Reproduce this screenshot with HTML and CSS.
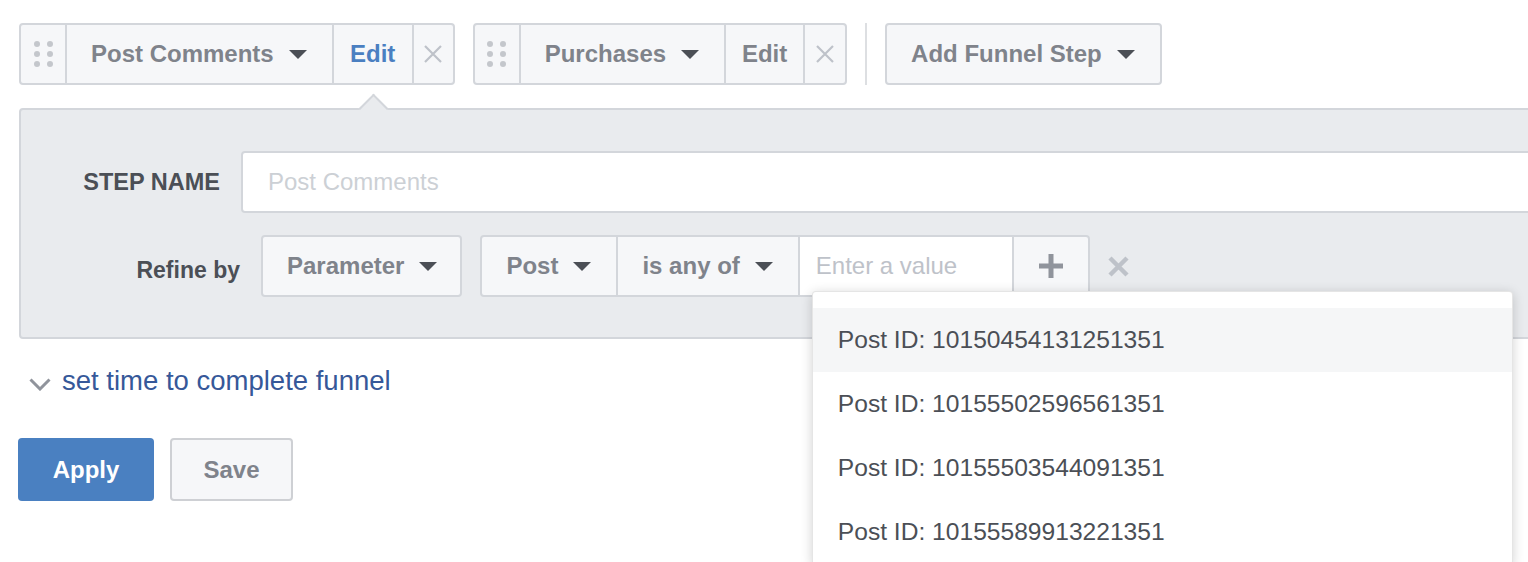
FILE: index.html
```html
<html>
	<head>
		<title>Funnel steps</title>
		<meta charset="utf-8" />
		<link rel="stylesheet" href="styles.css">
	</head>
	<body>
		<div class="page">
			<div class="toolbar">
				<div class="step">
					<div class="cell handle"><span class="dots"><i></i><i></i><i></i><i></i><i></i><i></i></span></div>
					<div class="cell select">Post Comments<span class="caret"></span></div>
					<div class="cell edit active">Edit</div>
					<div class="cell close">
						<svg width="20" height="20" viewBox="0 0 20 20"><path d="M2 2L18 18M18 2L2 18" stroke="#bec2c9" stroke-width="2.2" fill="none"/></svg>
					</div>
				</div>
				<div class="step">
					<div class="cell handle"><span class="dots"><i></i><i></i><i></i><i></i><i></i><i></i></span></div>
					<div class="cell select">Purchases<span class="caret"></span></div>
					<div class="cell edit small">Edit</div>
					<div class="cell close wide">
						<svg width="20" height="20" viewBox="0 0 20 20"><path d="M2 2L18 18M18 2L2 18" stroke="#bec2c9" stroke-width="2.2" fill="none"/></svg>
					</div>
				</div>
				<div class="divider"></div>
				<div class="step">
					<div class="cell select">Add Funnel Step<span class="caret"></span></div>
				</div>
			</div>

			<div class="panel">
				<span class="notch"></span>
				<div class="row">
					<label class="label name-label">STEP NAME</label>
					<div class="text-input">Post Comments</div>
				</div>
				<div class="row refine">
					<label class="label refine-label">Refine by</label>
					<div class="step">
						<div class="cell select param">Parameter<span class="caret"></span></div>
					</div>
					<div class="step rule">
						<div class="cell select">Post<span class="caret"></span></div>
						<div class="cell select">is any of<span class="caret"></span></div>
						<div class="cell value">
							<span class="placeholder">Enter a value</span>
							<div class="menu">
								<div class="item hover">Post ID: 10150454131251351</div>
								<div class="item">Post ID: 10155502596561351</div>
								<div class="item">Post ID: 10155503544091351</div>
								<div class="item">Post ID: 10155589913221351</div>
							</div>
						</div>
						<div class="cell plus">
							<svg width="24" height="24" viewBox="0 0 24 24"><path d="M12 0V24M0 12H24" stroke="#90949c" stroke-width="5" fill="none"/></svg>
						</div>
					</div>
					<div class="remove">
						<svg width="21" height="21" viewBox="0 0 21 21"><path d="M2 2L19 19M19 2L2 19" stroke="#bec2c9" stroke-width="4.5" fill="none"/></svg>
					</div>
				</div>
			</div>

			<div class="more">
				<svg width="22" height="13" viewBox="0 0 22 13"><path d="M1.5 1.5L11 11L20.5 1.5" stroke="#90949c" stroke-width="3" fill="none"/></svg>
				<span>set time to complete funnel</span>
			</div>

			<div class="actions">
				<button class="btn apply">Apply</button>
				<button class="btn save">Save</button>
			</div>
		</div>
	</body>
</html>
```

FILE: styles.css
```css
body {
	margin: 0;
	background: #fff;
	font-family: "Liberation Sans", Arial, sans-serif;
	overflow: hidden;
}
.page {
	padding: 23px 0 0 19px;
}
.toolbar {
	display: flex;
	gap: 18px;
	height: 62px;
}
.step {
	display: flex;
	box-sizing: border-box;
	height: 62px;
	border: solid #d3d6db 2px;
	border-radius: 4px;
	background: #f6f7f9;
}
.cell {
	display: flex;
	align-items: center;
	box-sizing: border-box;
	border-left: solid #d3d6db 2px;
	font-size: 24px;
	font-weight: bold;
	color: #7f838b;
	white-space: nowrap;
}
.cell:first-child {
	border-left: 0;
}
.handle {
	width: 44px;
	justify-content: center;
}
.dots {
	display: grid;
	grid-template-columns: 6px 6px;
	gap: 4px 7px;
}
.dots i {
	width: 6px;
	height: 6px;
	border-radius: 50%;
	background: #c4c7cc;
}
.select {
	padding: 0 25px 0 24px;
}
.caret {
	width: 0;
	height: 0;
	margin-left: 15px;
	border-left: 9px solid transparent;
	border-right: 9px solid transparent;
	border-top: 9px solid #4b4f56;
}
.edit {
	width: 80px;
	justify-content: center;
}
.edit.small {
	width: 79px;
}
.active {
	color: #4a7fc1;
}
.close {
	width: 41px;
	justify-content: center;
}
.close.wide {
	width: 42px;
}
.divider {
	width: 2px;
	background: #dddfe2;
}
.panel {
	position: relative;
	margin: 23px -40px 0 0;
	padding: 41px 0 40px 0;
	border: solid #d3d6db 2px;
	border-radius: 4px;
	background: #e9ebee;
}
.notch {
	position: absolute;
	top: -12.5px;
	left: 341.5px;
	width: 21px;
	height: 21px;
	box-sizing: border-box;
	background: #e9ebee;
	border-top: solid #d3d6db 2px;
	border-left: solid #d3d6db 2px;
	transform: rotate(45deg);
}
.row {
	display: flex;
	align-items: center;
	height: 62px;
}
.refine {
	margin-top: 22px;
}
.label {
	font-size: 24px;
	font-weight: bold;
	color: #4b4f56;
	text-align: right;
	margin-right: 21px;
}
.name-label {
	width: 199px;
	font-size: 23.5px;
}
.refine-label {
	width: 219px;
	font-size: 23px;
	margin-top: 8px;
}
.text-input {
	flex: 1;
	box-sizing: border-box;
	height: 62px;
	display: flex;
	align-items: center;
	padding-left: 25px;
	border: solid #d3d6db 2px;
	border-radius: 4px;
	background: #fff;
	font-size: 24px;
	color: #ccd0d5;
}
.param {
	padding-right: 23px;
}
.rule {
	margin-left: 18px;
}
.value {
	position: relative;
	width: 214px;
	padding-left: 16px;
	background: #fff;
	font-weight: normal;
	color: #bec2c9;
}
.plus {
	width: 76px;
	justify-content: center;
}
.remove {
	display: flex;
	margin-left: 18px;
}
.menu {
	position: absolute;
	top: 54px;
	left: 12px;
	z-index: 5;
	width: 701px;
	padding-top: 16px;
	box-sizing: border-box;
	background: #fff;
	border: solid rgba(0, 0, 0, 0.1) 1px;
	border-radius: 4px;
	box-shadow: 0 2px 12px rgba(0, 0, 0, 0.18);
}
.item {
	height: 64px;
	line-height: 64px;
	padding-left: 25px;
	font-size: 24.6px;
	color: #4b4f56;
}
.hover {
	background: #f5f6f7;
}
.more {
	display: flex;
	align-items: center;
	gap: 11px;
	margin-top: 27px;
	padding-left: 10px;
	height: 30px;
	font-size: 27.5px;
	color: #365899;
}
.more svg {
	margin-top: 6px;
}
.actions {
	display: flex;
	gap: 16px;
	margin: 42px 0 0 -1px;
}
.btn {
	height: 63px;
	border-radius: 4px;
	font-family: "Liberation Sans", Arial, sans-serif;
	font-size: 24px;
	font-weight: bold;
	outline: 0;
}
.apply {
	width: 136px;
	border: 0;
	background: #4a80c1;
	color: #fff;
}
.save {
	width: 123px;
	border: solid #ced0d4 2px;
	background: #f6f7f9;
	color: #7f838b;
}
```
